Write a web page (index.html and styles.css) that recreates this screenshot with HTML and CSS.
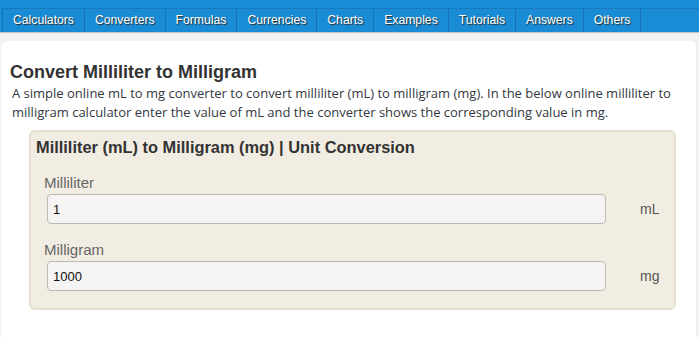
FILE: index.html
```html
<!DOCTYPE html>
<html lang="en">
<head>
    <meta charset="UTF-8">
    <meta name="viewport" content="width=device-width, initial-scale=1">
    <title>Convert Milliliter to Milligram</title>
    <link rel="stylesheet" href="styles.css">
</head>
<body>

<nav class="topnav">
    <ul class="menu">
        <li><a href="#">Calculators</a></li>
        <li><a href="#">Converters</a></li>
        <li><a href="#">Formulas</a></li>
        <li><a href="#">Currencies</a></li>
        <li><a href="#">Charts</a></li>
        <li><a href="#">Examples</a></li>
        <li><a href="#">Tutorials</a></li>
        <li><a href="#">Answers</a></li>
        <li><a href="#">Others</a></li>
    </ul>
</nav>

<div class="page">
    <h1>Convert Milliliter to Milligram</h1>
    <p class="intro">A simple online mL to mg converter to convert milliliter (mL) to milligram (mg). In the below online milliliter to milligram calculator enter the value of mL and the converter shows the corresponding value in mg.</p>

    <!-- converter box -->
    <div class="calc">
        <h2>Milliliter (mL) to Milligram (mg) | Unit Conversion</h2>

        <div class="field">
            <label for="ml">Milliliter</label>
            <div class="row">
                <input type="text" id="ml" value="1">
                <span class="unit">mL</span>
            </div>
        </div>

        <div class="field">
            <label for="mg">Milligram</label>
            <div class="row">
                <input type="text" id="mg" value="1000">
                <span class="unit">mg</span>
            </div>
        </div>
    </div>
</div>

</body>
</html>
```

FILE: styles.css
```css
body {
    margin: 0;
    background-color: #f3f1f3;
    font-family: "Liberation Sans", Arial, sans-serif;
}

.topnav {
    background-color: #1a8cd6;
    padding-top: 8px;
    border-bottom: 1px solid #c4c4c4;
}

.menu {
    display: flex;
    list-style: none;
    margin: 0 0 0 2px;
    padding: 0;
    border-top: 1px solid #1779bf;
}

.menu li {
    border-left: 1px solid #1571b3;
}

.menu li:last-child {
    border-right: 1px solid #1571b3;
}

.menu a {
    display: block;
    height: 23px;
    line-height: 22px;
    padding: 0 10px;
    color: #fff;
    font-size: 12.2px;
    text-decoration: none;
    text-shadow: 1px 1px 1px #2a2a2a;
}

.page {
    background-color: #fff;
    margin: 8px 3px 0 1px;
    padding: 20px 20px 28px 9px;
    border-radius: 6px 6px 0 0;
}

h1 {
    margin: 0;
    font-size: 18px;
    line-height: 22px;
    color: #333;
}

.intro {
    margin: 1px 0 8px 2px;
    font-family: "Open Sans", sans-serif;
    font-size: 13px;
    line-height: 19px;
    color: #333842;
}

.calc {
    margin-left: 19px;
    background-color: #f2ede3;
    border: 2px solid #e5dfcf;
    border-radius: 6px;
    padding: 4px 0 17px 5px;
}

.calc h2 {
    margin: 0 0 16px;
    font-size: 16.4px;
    line-height: 22px;
    color: #333;
}

.field {
    padding-left: 8px;
    margin-bottom: 17px;
}

.field:last-child {
    margin-bottom: 0;
}

.field label {
    display: block;
    color: #666;
    font-size: 15px;
    line-height: 18px;
    margin-bottom: 2px;
}

.row {
    display: flex;
    align-items: center;
}

.row input {
    flex: 1;
    height: 30px;
    box-sizing: border-box;
    margin-left: 3px;
    padding: 0 5px;
    background-color: #f5f4f2;
    border: 1px solid #bcbab6;
    border-radius: 4px;
    font-family: "Liberation Sans", Arial, sans-serif;
    font-size: 13px;
    color: #111;
}

.unit {
    width: 68px;
    box-sizing: border-box;
    padding-left: 34px;
    color: #555;
    font-size: 14px;
}
```
